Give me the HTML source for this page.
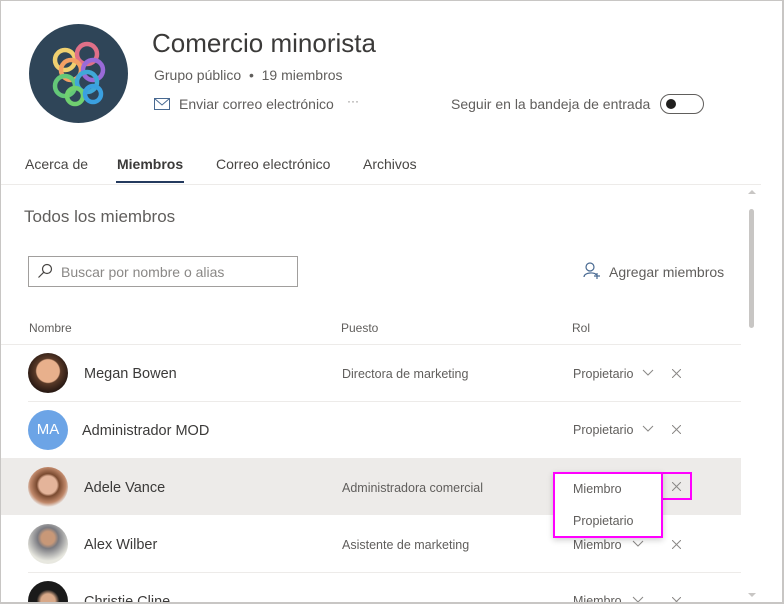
<!DOCTYPE html>
<html style="overflow:hidden;width:784px;height:604px"><head><meta charset="utf-8"><style>
*{margin:0;padding:0;box-sizing:border-box}
body{width:784px;height:604px;overflow:hidden;background:#fff;font-family:"Liberation Sans",sans-serif;color:#323130;position:relative}
.a{position:absolute;white-space:nowrap}
.sep{position:absolute;left:28px;width:713px;height:1px;background:#edebe9}
.av{position:absolute;left:28px;width:40px;height:40px;border-radius:50%;overflow:hidden}
.name{position:absolute;left:84px;font-size:14.5px;color:#3b3a39}
.job{position:absolute;left:342px;font-size:12.5px;color:#605e5c}
.role{position:absolute;left:573px;font-size:12.5px;color:#605e5c}
svg{position:absolute}
</style></head><body>
<div class="a" style="left:0;top:0;width:784px;height:604px;border:1px solid #c8c6c4;border-right:2px solid #c8c6c4;border-bottom:2px solid #c8c6c4;z-index:5;pointer-events:none"></div>
<div class="a" style="left:29px;top:24px;width:99px;height:99px;border-radius:50%;background:#2f4558"></div>
<svg style="left:29px;top:24px" width="99" height="99" viewBox="0 0 99 99" fill="none" stroke-width="4.5">
<circle cx="36" cy="36" r="10" stroke="#f0d070"/><circle cx="58" cy="30" r="10" stroke="#e07088"/>
<circle cx="42" cy="46" r="10" stroke="#f4a064"/><circle cx="64" cy="46" r="10" stroke="#9a6ad8"/>
<circle cx="36" cy="62" r="10" stroke="#64c878"/><circle cx="58" cy="58" r="10" stroke="#40a8d8"/>
<circle cx="46" cy="72" r="8" stroke="#70d070"/><circle cx="64" cy="70" r="8" stroke="#3aa0e0"/></svg>
<div class="a" style="left:152px;top:28px;font-size:26px;color:#3b3a39">Comercio minorista</div>
<div class="a" style="left:154px;top:67px;font-size:14px;color:#605e5c">Grupo público &nbsp;•&nbsp; 19 miembros</div>
<svg style="left:154px;top:98px" width="16" height="12" viewBox="0 0 16 12" fill="none" stroke="#486991" stroke-width="1"><rect x="0.5" y="0.5" width="15" height="11"/><path d="M0.5 0.5 L8 7 L15.5 0.5"/></svg>
<div class="a" style="left:179px;top:96px;font-size:14px;color:#605e5c">Enviar correo electrónico</div>
<div class="a" style="left:347px;top:94px;font-size:12px;color:#8a8886">···</div>
<div class="a" style="left:451px;top:96px;font-size:14px;color:#605e5c">Seguir en la bandeja de entrada</div>
<div class="a" style="left:660px;top:94px;width:44px;height:20px;border:1px solid #605e5c;border-radius:10px"></div>
<div class="a" style="left:666px;top:99px;width:10px;height:10px;border-radius:50%;background:#201f1e"></div>
<div class="a" style="left:25px;top:156px;font-size:14px;color:#484644">Acerca de</div>
<div class="a" style="left:117px;top:156px;font-size:14px;font-weight:bold;color:#3b3a39">Miembros</div>
<div class="a" style="left:116px;top:181px;width:68px;height:2px;background:#243a5e"></div>
<div class="a" style="left:216px;top:156px;font-size:14px;color:#484644">Correo electrónico</div>
<div class="a" style="left:363px;top:156px;font-size:14px;color:#484644">Archivos</div>
<div class="a" style="left:1px;top:184px;width:760px;height:1px;background:#edebe9"></div>
<div class="a" style="left:748px;top:190px;width:0;height:0;border-left:4px solid transparent;border-right:4px solid transparent;border-bottom:4px solid #c8c6c4"></div>
<div class="a" style="left:749px;top:209px;width:5px;height:119px;border-radius:3px;background:#c8c6c4"></div>
<div class="a" style="left:748px;top:593px;width:0;height:0;border-left:4px solid transparent;border-right:4px solid transparent;border-top:4px solid #c8c6c4"></div>
<div class="a" style="left:24px;top:207px;font-size:17px;color:#605e5c">Todos los miembros</div>
<div class="a" style="left:28px;top:256px;width:270px;height:31px;border:1px solid #a19f9d"></div>
<svg style="left:37px;top:263px" width="16" height="16" viewBox="0 0 16 16" fill="none" stroke="#484644" stroke-width="1.2"><circle cx="10" cy="6" r="4.5"/><path d="M6.8 9.2 L1.5 14.5"/></svg>
<div class="a" style="left:61px;top:264px;font-size:14px;color:#8a8886">Buscar por nombre o alias</div>
<svg style="left:583px;top:262px" width="18" height="18" viewBox="0 0 18 18" fill="none" stroke="#486991" stroke-width="1.2"><circle cx="7" cy="5" r="4"/><path d="M1 15 C1 10 13 10 13 13"/><path d="M14 11v6M11 14h6"/></svg>
<div class="a" style="left:609px;top:264px;font-size:14px;color:#605e5c">Agregar miembros</div>
<div class="a" style="left:29px;top:321px;font-size:12px;color:#605e5c">Nombre</div>
<div class="a" style="left:341px;top:321px;font-size:12px;color:#605e5c">Puesto</div>
<div class="a" style="left:572px;top:321px;font-size:12px;color:#605e5c">Rol</div>
<div class="a" style="left:1px;top:344px;width:740px;height:1px;background:#edebe9"></div>
<div class="a" style="left:1px;top:458px;width:740px;height:57px;background:#edebe9"></div>
<div class="sep" style="top:401px"></div>
<div class="sep" style="top:572px"></div>
<div class="av" style="top:353px;background:radial-gradient(circle at 50% 45%,#e8b08c 0 38%,#5a3a28 42%,#2a1a14 70%)"></div>
<div class="av" style="top:410px;background:#6ca4e6;color:#fff;font-size:15px;text-align:center;line-height:40px">MA</div>
<div class="av" style="top:467px;background:radial-gradient(circle at 50% 45%,#e4b49a 0 30%,#7a4a30 38%,#c0886a 60%,#f0f0f0 75%)"></div>
<div class="av" style="top:524px;background:radial-gradient(circle at 50% 35%,#c89878 0 20%,#7a7a80 32%,#e8e8e0 70%)"></div>
<div class="av" style="top:581px;background:radial-gradient(circle at 50% 50%,#d8a888 0 25%,#1a1a1a 40%)"></div>
<div class="name" style="top:366px">Megan Bowen</div>
<div class="name" style="top:423px;left:82px">Administrador MOD</div>
<div class="name" style="top:480px">Adele Vance</div>
<div class="name" style="top:537px">Alex Wilber</div>
<div class="name" style="top:594px">Christie Cline</div>
<div class="job" style="top:367px">Directora de marketing</div>
<div class="job" style="top:481px">Administradora comercial</div>
<div class="job" style="top:538px">Asistente de marketing</div>
<div class="role" style="top:367px">Propietario</div>
<div class="role" style="top:423px">Propietario</div>
<div class="role" style="top:538px">Miembro</div>
<div class="role" style="top:594px">Miembro</div>
<svg style="left:642px;top:369px" width="12" height="8" viewBox="0 0 12 8" fill="none" stroke="#8a8886"><path d="M1 1l5 5 5-5"/></svg>
<svg style="left:642px;top:425px" width="12" height="8" viewBox="0 0 12 8" fill="none" stroke="#8a8886"><path d="M1 1l5 5 5-5"/></svg>
<svg style="left:632px;top:540px" width="12" height="8" viewBox="0 0 12 8" fill="none" stroke="#8a8886"><path d="M1 1l5 5 5-5"/></svg>
<svg style="left:632px;top:596px" width="12" height="8" viewBox="0 0 12 8" fill="none" stroke="#8a8886"><path d="M1 1l5 5 5-5"/></svg>
<svg style="left:672px;top:369px" width="9" height="9" viewBox="0 0 9 9" stroke="#8a8886"><path d="M0 0l9 9M9 0L0 9"/></svg>
<svg style="left:672px;top:425px" width="9" height="9" viewBox="0 0 9 9" stroke="#8a8886"><path d="M0 0l9 9M9 0L0 9"/></svg>
<svg style="left:672px;top:482px" width="9" height="9" viewBox="0 0 9 9" stroke="#8a8886"><path d="M0 0l9 9M9 0L0 9"/></svg>
<svg style="left:672px;top:540px" width="9" height="9" viewBox="0 0 9 9" stroke="#8a8886"><path d="M0 0l9 9M9 0L0 9"/></svg>
<svg style="left:672px;top:597px" width="9" height="9" viewBox="0 0 9 9" stroke="#8a8886"><path d="M0 0l9 9M9 0L0 9"/></svg>
<div class="a" style="left:662px;top:472px;width:30px;height:28px;border:2px solid #f0f;border-left:none"></div>
<div class="a" style="left:553px;top:472px;width:110px;height:66px;border:2px solid #f0f;background:#fff;box-shadow:0 2px 6px rgba(0,0,0,.2)"></div>
<div class="a" style="left:573px;top:482px;font-size:12.5px;color:#605e5c">Miembro</div>
<div class="a" style="left:573px;top:514px;font-size:12.5px;color:#605e5c">Propietario</div>
</body></html>
